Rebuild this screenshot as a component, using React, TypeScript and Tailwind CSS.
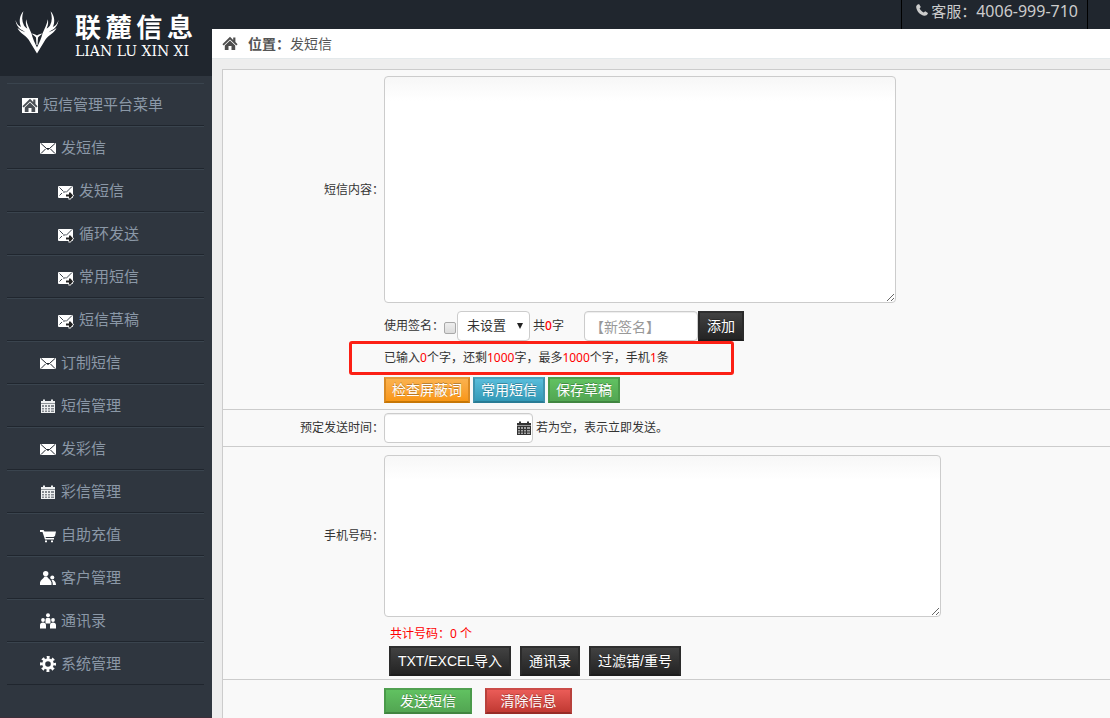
import type { ReactNode } from "react";

const SANS = "font-['Noto_Sans','Noto_Sans_CJK_SC',sans-serif]";
const ARIAL = "font-['Liberation_Sans','Noto_Sans_CJK_SC',sans-serif]";

type IconName = "home" | "mail" | "send" | "calendar" | "cart" | "user" | "group" | "cog";

type MenuItem = { label: string; icon: IconName; level: 0 | 1 | 2 };

const MENU: MenuItem[] = [
  { label: "短信管理平台菜单", icon: "home", level: 0 },
  { label: "发短信", icon: "mail", level: 1 },
  { label: "发短信", icon: "send", level: 2 },
  { label: "循环发送", icon: "send", level: 2 },
  { label: "常用短信", icon: "send", level: 2 },
  { label: "短信草稿", icon: "send", level: 2 },
  { label: "订制短信", icon: "mail", level: 1 },
  { label: "短信管理", icon: "calendar", level: 1 },
  { label: "发彩信", icon: "mail", level: 1 },
  { label: "彩信管理", icon: "calendar", level: 1 },
  { label: "自助充值", icon: "cart", level: 1 },
  { label: "客户管理", icon: "user", level: 1 },
  { label: "通讯录", icon: "group", level: 1 },
  { label: "系统管理", icon: "cog", level: 1 },
];

const INDENT = ["pl-[15px]", "pl-[33px]", "pl-[51px]"];

function HomeShape() {
  return (
    <>
      <path d="M8 .8.4 8.200l1.300 1.200L8 3.400l6.300 6 1.300-1.200L13.400 6V1.500h-2.200v2.400z" />
      <path d="M8 4.500 2.800 9.400V14h3.700v-4h3v4h3.700V9.400z" />
    </>
  );
}

function CalendarShape() {
  return (
    <>
      <path d="M1 3h2V1.500h2V3h6V1.500h2V3h2v2.500H1z" />
      <path
        fillRule="evenodd"
        d="M1 6h14v9H1zM2 7v2h2V7zM5 7v2h2V7zM8 7v2h2V7zM11 7v2h3V7zM2 10v1.500h2V10zM5 10v1.500h2V10zM8 10v1.500h2V10zM11 10v1.500h3V10zM2 12.500V14h2v-1.500zM5 12.500V14h2v-1.500zM8 12.500V14h2v-1.500zM11 12.500V14h3v-1.500z"
      />
      <path opacity="0.45" d="M2 7h12v7H2z" />
    </>
  );
}

const ICONS: Record<IconName, ReactNode> = {
  home: (
    <>
      <path fill="#fff" d="M0 2h16v15H0z" />
      <g fill="#4a4f55" transform="translate(0 2)">
        <HomeShape />
      </g>
    </>
  ),
  mail: (
    <>
      <rect y="4" width="16" height="11" rx="1" fill="#fff" />
      <path
        d="M1 4.500l5.500 5h3l5.500-5M1 14.500l4.500-4.500M15 14.500l-4.500-4.500M6.500 9.500l1.500 1 1.500-1"
        fill="none"
        stroke="#20262e"
        strokeWidth="1"
      />
    </>
  ),
  send: (
    <>
      <rect y="4" width="15" height="12" rx="1" fill="#fff" />
      <path d="M1.500 5.500l4 4M5.500 10.500l2-1M8 10.500l6-6M1.500 13.500l2.500-2.500" fill="none" stroke="#3c444d" strokeWidth="1" />
      <path d="M6.500 11.500h4V9.500h2l3.500 4-3.500 4h-2v-2h-4z" fill="#fff" />
      <path d="M8 12.500h3v-2h1.500l2.500 3-2.500 3H11v-2H8z" fill="#222" />
    </>
  ),
  calendar: (
    <g fill="#eef0f1" transform="translate(0 1)">
      <CalendarShape />
    </g>
  ),
  cart: (
    <>
      <path fill="#fff" d="M0 4h3.500l1 1.500H16l-1 4.500-1.500 1H5.500l.5 1h8v1.500H5L2.500 6H0z" />
      <path fill="#fff" d="M5 14.500h2v1.800H5zM11 14.500h2v1.800h-2z" />
    </>
  ),
  user: (
    <g fill="#fff">
      <circle cx="5.700" cy="4.600" r="2.700" />
      <path d="M0 16v-2.500C.6 11 3 10 4.500 7.500H7c1 2 4 3.500 4.500 6V16z" />
      <circle cx="12.300" cy="8.500" r="2" />
      <path d="M11.500 11h2c1.500 1.200 2.500 2.500 2.500 5h-3.200c0-2-.3-3.500-1.300-5z" />
    </g>
  ),
  group: (
    <g fill="#fff">
      <circle cx="8" cy="3.200" r="2" />
      <circle cx="3" cy="8" r="1.900" />
      <circle cx="13" cy="8" r="1.900" />
      <path d="M5.500 11.500V8c0-1.500 1-2.300 2.500-2.300s2.500.8 2.500 2.300v3.500z" />
      <path d="M0 16.500v-3.300C0 11.400 1.200 10.500 3 10.500s3 .9 3 2.700v3.300zM10 16.500v-3.300c0-1.800 1.200-2.700 3-2.700s3 .9 3 2.700v3.300z" />
    </g>
  ),
  cog: (
    <g fill="none" stroke="#fff">
      <circle cx="8" cy="9" r="4.300" strokeWidth="3" />
      <circle cx="8" cy="9" r="6.600" strokeWidth="2.800" strokeDasharray="2.800 2.384" strokeDashoffset="1.400" />
    </g>
  ),
};

function Icon({ name }: { name: IconName }) {
  return (
    <svg viewBox="0 0 16 18" className="h-[18px] w-4 shrink-0" aria-hidden="true">
      {ICONS[name]}
    </svg>
  );
}

function Logo() {
  return (
    <div className="flex h-[76px] items-start gap-4 bg-[#20262e] pl-[15px] pt-[10px]">
      <svg viewBox="0 0 44 44" className="h-11 w-11" fill="#fff" aria-hidden="true">
        <g id="antler">
          <path d="M22 43.500 13.500 29.500C10.500 25 4.500 23 2.500 18c3 2.500 5.500 3 8 4.500C7.500 19.500 2 19.500.4 10c1.600 4 3.200 6 5.800 7C3.800 12 4.300 6 8.400 1.200 6.800 6 6.600 11 9 15.500c1 1.600 2 2.400 3.400 3-1.500-3-1.900-6-1.200-9.300C12 14 14.500 19 16.500 23.500c1 4 3 9 5.500 14z" />
        </g>
        <use href="#antler" transform="translate(44 0) scale(-1 1)" />
        <path d="M16.500 23.500c2 .3 4 1 5.500 2 1.500-1 3.500-1.700 5.500-2-1.500 1.500-3.500 2.500-4.500 4L22.500 35h-1L21 27.500c-1-1.500-3-2.500-4.500-4z" />
      </svg>
      <div className="w-[118px] text-white">
        <div className="flex justify-between font-['Noto_Sans_CJK_SC',sans-serif] text-[26px] font-bold leading-8">
          {["联", "麓", "信", "息"].map((c) => (
            <span key={c}>{c}</span>
          ))}
        </div>
        <div className="whitespace-nowrap font-['DejaVu_Serif',serif] text-sm leading-[18px]">LIAN LU XIN XI</div>
      </div>
    </div>
  );
}

function Sidebar() {
  return (
    <aside className="w-[212px] shrink-0 border-b border-[#3c2f3a] bg-[#2f363f]">
      <Logo />
      <nav className="ml-[7px] mr-2 mt-[7px]">
        {MENU.map((item, i) => (
          <a
            key={i}
            href="#"
            className={`flex h-[43px] items-center gap-[5px] border-b border-t border-b-[#20262e] border-t-[#3a444e] text-[15px] text-[#8b98a7] ${INDENT[item.level]}`}
          >
            <Icon name={item.icon} />
            {item.label}
          </a>
        ))}
      </nav>
    </aside>
  );
}

const TONES = {
  orange: "border-t-[#e59a3c] border-x-[#d98a24] border-b-[#c67605] from-[#fbb450] to-[#f89406]",
  blue: "border-t-[#4ca4c0] border-x-[#3f93ae] border-b-[#297c95] from-[#5bc0de] to-[#2f96b4]",
  green: "border-t-[#50a050] border-x-[#4a9a4a] border-b-[#408540] from-[#62c462] to-[#51a351]",
  red: "border-t-[#cb4c48] border-x-[#b8413c] border-b-[#972b26] from-[#ee5f5b] to-[#bd362f]",
  black: "border-t-[#2f2f2f] border-x-[#2b2b2b] border-b-[#1e1e1e] from-[#444444] to-[#222222]",
};

type BtnProps = { tone: keyof typeof TONES; size: string; children: ReactNode };

function Btn({ tone, size, children }: BtnProps) {
  return (
    <button
      type="button"
      className={`flex items-center justify-center whitespace-nowrap border-2 bg-gradient-to-b bg-origin-border text-sm text-white ${ARIAL} [text-shadow:0_-1px_0_rgba(0,0,0,0.25)] ${TONES[tone]} ${size}`}
    >
      {children}
    </button>
  );
}

const FIELD = "rounded-[4px] border border-[#cccccc] bg-white shadow-[inset_0_1px_1px_rgba(0,0,0,0.075)]";
const AREA = "block max-w-full resize rounded-[4px] border border-[#cccccc] bg-white bg-gradient-to-b from-[#f7f7f7] to-white to-[24px]";
const ROW = "grid grid-cols-[161px_1fr] border-t border-[#cccccc]";
const LABEL = "self-center text-right";

function Num({ children }: { children: ReactNode }) {
  return <span className="text-[#ff0000]">{children}</span>;
}

function SendForm() {
  return (
    <form className="ml-[10px] mt-[10px] flex-1 border-l border-[#cccccc] bg-[#f9f9f9] text-xs text-[#333333]">
      <div className={`${ROW} pb-[6px] pt-[6px]`}>
        <label htmlFor="content" className={LABEL}>
          短信内容：
        </label>
        <textarea id="content" className={`${AREA} h-[227px] w-[512px]`} />
        <div className="col-start-2 mt-2 flex h-[30px] items-center">
          <label htmlFor="use-sign">使用签名：</label>
          <input
            id="use-sign"
            type="checkbox"
            className="mt-1 h-3 w-3 appearance-none rounded-[2px] border border-[#a9a9a9] bg-gradient-to-b from-[#eeeeee] to-[#dcdcdc]"
          />
          <div className="relative ml-px">
            <select
              aria-label="签名"
              className="block h-[30px] w-[73px] appearance-none rounded-[4px] border border-[#cccccc] bg-white pl-[9px] text-[13px] text-[#333333]"
            >
              <option>未设置</option>
            </select>
            <svg viewBox="0 0 6 6" className="pointer-events-none absolute right-[7px] top-3 h-[6px] w-[6px]" aria-hidden="true">
              <path d="M0 0h6L3 6z" fill="#222" />
            </svg>
          </div>
          <span className="ml-[3px]">
            共<b className="font-medium text-[#ff0000]">0</b>字
          </span>
          <input
            aria-label="新签名"
            placeholder="【新签名】"
            className={`${FIELD} ml-5 h-[30px] w-[114px] pl-[5px] text-sm placeholder:text-[#999999]`}
          />
          <Btn tone="black" size="h-[30px] w-[46px]">
            添加
          </Btn>
        </div>
        <p className="col-start-2 -ml-[35px] flex h-[34px] w-[385px] items-center rounded-[3px] border-[3px] border-[#fc2015] pl-8">
          <span>
            已输入<Num>0</Num>个字，还剩<Num>1000</Num>字，最多<Num>1000</Num>个字，手机<Num>1</Num>条
          </span>
        </p>
        <div className="col-start-2 mt-[2px] flex gap-[3px]">
          <Btn tone="orange" size="h-[26px] w-[86px]">
            检查屏蔽词
          </Btn>
          <Btn tone="blue" size="h-[26px] w-[72px]">
            常用短信
          </Btn>
          <Btn tone="green" size="h-[26px] w-[72px]">
            保存草稿
          </Btn>
        </div>
      </div>

      <div className={`${ROW} py-[3px]`}>
        <label htmlFor="time" className={LABEL}>
          预定发送时间：
        </label>
        <div className="flex items-center gap-[3px]">
          <div className="relative">
            <input id="time" className={`${FIELD} block h-[30px] w-[149px] px-2 text-sm`} />
            <svg viewBox="0 0 16 16" className="absolute right-[1px] top-[7px] h-4 w-4" fill="#333333" aria-hidden="true">
              <CalendarShape />
            </svg>
          </div>
          若为空，表示立即发送。
        </div>
      </div>

      <div className={`${ROW} pb-[3px] pt-2`}>
        <label htmlFor="phones" className={LABEL}>
          手机号码：
        </label>
        <textarea id="phones" className={`${AREA} h-[162px] w-[557px]`} />
        <p className="col-start-2 ml-[6px] mt-2 leading-[18px] text-[#ff0000]">共计号码：0 个</p>
        <div className="col-start-2 ml-[5px] mt-[3px] flex gap-[9px]">
          <Btn tone="black" size="h-[30px] w-[122px]">
            TXT/EXCEL导入
          </Btn>
          <Btn tone="black" size="h-[30px] w-[60px]">
            通讯录
          </Btn>
          <Btn tone="black" size="h-[30px] w-[92px]">
            过滤错/重号
          </Btn>
        </div>
      </div>

      <div className={`${ROW} pt-2`}>
        <div className="col-start-2 flex gap-[13px]">
          <Btn tone="green" size="h-[26px] w-[88px]">
            发送短信
          </Btn>
          <Btn tone="red" size="h-[26px] w-[87px]">
            清除信息
          </Btn>
        </div>
      </div>
    </form>
  );
}

export default function App() {
  return (
    <div lang="zh-CN" className={`flex min-h-screen bg-[#eeeeee] ${SANS}`}>
      <Sidebar />
      <main className="flex min-w-0 flex-1 flex-col">
        <header className="flex h-[29px] justify-end bg-[#20262e]">
          <div className="mr-[22px] flex items-start gap-[3px] border-x border-black pl-[14px] pr-[9px] text-[15px] leading-[22px] text-[#cccccc]">
            <svg viewBox="0 0 12 12" className="mt-1 h-3 w-3" fill="currentColor" aria-hidden="true">
              <path d="M2.200.3C1 .8 0 2 .2 3.300c.5 4.200 4.200 8 8.400 8.500 1.300.1 2.600-.8 3.200-2l.1-.8L9.200 7.200 7.700 8.500C5.900 7.700 4.500 6.300 3.600 4.500L4.800 3 3.200.2z" />
            </svg>
            <span>
              客服：<span className="text-base leading-[22px]">4006-999-710</span>
            </span>
          </div>
        </header>
        <div className="flex h-[30px] items-center border-b border-[#e4e9eb] bg-white pl-[10px] text-sm text-[#555555]">
          <svg viewBox="0 0 16 16" className="mr-[10px] h-4 w-4" fill="#4d4d4d" aria-hidden="true">
            <HomeShape />
          </svg>
          <b>位置：</b>
          <a href="#">发短信</a>
        </div>
        <SendForm />
      </main>
    </div>
  );
}
